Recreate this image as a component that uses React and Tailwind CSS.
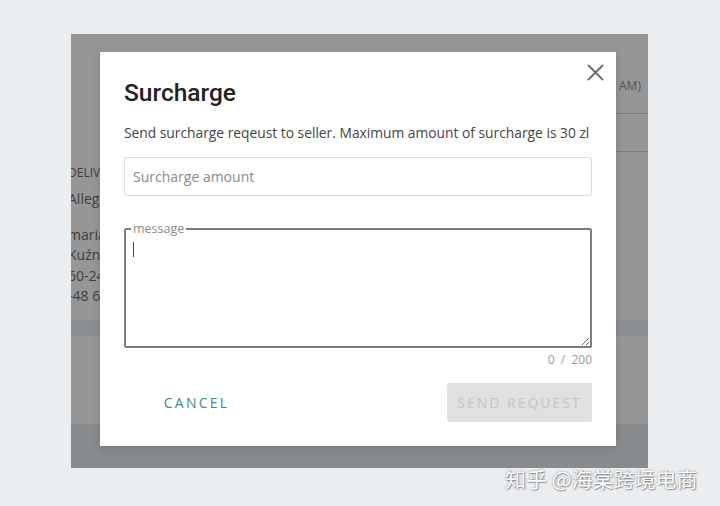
export default function App() {
  const sans = { fontFamily: '"Open Sans", "Liberation Sans", sans-serif' };
  return (
    <div className="relative w-[720px] h-[506px] bg-[#eaeef1] overflow-hidden" style={sans}>
      <div className="pt-[34px] pl-[71px]">
        <div className="relative w-[577px] h-[434px] bg-[#969696] overflow-hidden flex flex-col">
          {/* background page content (under overlay) */}
          <div className="flex h-[286px]">
            <div className="w-[40px] pt-[130px] -ml-[3px] text-[#3e3e3e] text-[14px] leading-[20.5px] whitespace-nowrap">
              <div className="text-[12px] leading-[18px] mb-[7px]">DELIVERY</div>
              <div>Allegro</div>
              <div className="h-[15px]" />
              <div>maria</div>
              <div>Kuźnia</div>
              <div>60-245</div>
              <div>-48 600</div>
            </div>
            <div className="flex-1" />
            <div className="w-[33px] flex flex-col">
              <div className="h-[79px] pt-[44px] pl-[4px] text-[12px] text-[#555] whitespace-nowrap leading-[16px]">AM)</div>
              <div className="h-[1px] bg-[#7e7e7e]" />
              <div className="h-[37px]" />
              <div className="h-[1px] bg-[#7e7e7e]" />
            </div>
          </div>
          <div className="h-[16px] bg-[#8b8f93]" />
          <div className="h-[1px] bg-[#9a9a9a]" />
          <div className="h-[87px] bg-[#969696]" />
          <div className="flex-1 bg-[#888b8d]" />

          {/* modal */}
          <div className="absolute left-[29px] top-[18px] w-[516px] h-[394px] bg-white shadow-[0_2px_8px_rgba(0,0,0,0.15)] px-[24px] pt-[25px]">
            <button className="absolute right-[12px] top-[11px] w-[18px] h-[18px] flex items-center justify-center">
              <svg width="17" height="17" viewBox="0 0 17 17" fill="none" stroke="#6b6b6b" strokeWidth="1.8" strokeLinecap="round">
                <path d="M1.5 1.5 L15.5 15.5 M15.5 1.5 L1.5 15.5" />
              </svg>
            </button>
            <div className="text-[24.5px] leading-[32px] font-medium text-[#222]" style={{ fontFamily: 'Roboto, "Liberation Sans", sans-serif' }}>
              Surcharge
            </div>
            <div className="mt-[14px] text-[13.8px] leading-[20px] text-[#444] whitespace-nowrap">
              Send surcharge reqeust to seller. Maximum amount of surcharge is 30 zl
            </div>
            <div className="mt-[14px] h-[39px] w-[468px] border border-[#dcdcdc] rounded-[2px] flex items-center px-[8px]">
              <span className="text-[14px] text-[#8a8a8a]">Surcharge amount</span>
            </div>
            <fieldset className="mt-[25px] w-[468px] h-[127px] border-2 border-[#7c7c7c] rounded-[2px] relative">
              <legend className="ml-[5px] px-[2px] text-[12.5px] leading-[16px] text-[#8a8a8a]">message</legend>
              <div className="absolute left-[7px] top-[5px] w-[1px] h-[15px] bg-[#444]" />
              <textarea className="w-full h-full outline-none bg-transparent resize block" />
            </fieldset>
            <div className="mt-[4px] w-[468px] text-right text-[12px] leading-[16px] text-[#9a9a9a] whitespace-pre">0  /  200</div>
            <div className="mt-[15px] w-[468px] flex justify-between">
              <button className="w-[145px] h-[39px] flex items-center justify-center text-[14px] tracking-[2.2px] text-[#3f8c86]">
                CANCEL
              </button>
              <button className="w-[145px] h-[39px] rounded-[2px] bg-[#e0e0e0] flex items-center justify-center text-[14px] tracking-[2px] text-[#c4c4c4]">
                SEND REQUEST
              </button>
            </div>
          </div>
        </div>
      </div>
      <div
        className="absolute left-[505px] top-[463px] text-[21px] leading-[30px] text-white whitespace-nowrap"
        style={{ fontFamily: '"Noto Sans CJK SC", sans-serif', textShadow: '0 0 2px rgba(0,0,0,0.45), 1px 1px 1px rgba(0,0,0,0.3)' }}
      >
        知乎 @海棠跨境电商
      </div>
    </div>
  );
}
